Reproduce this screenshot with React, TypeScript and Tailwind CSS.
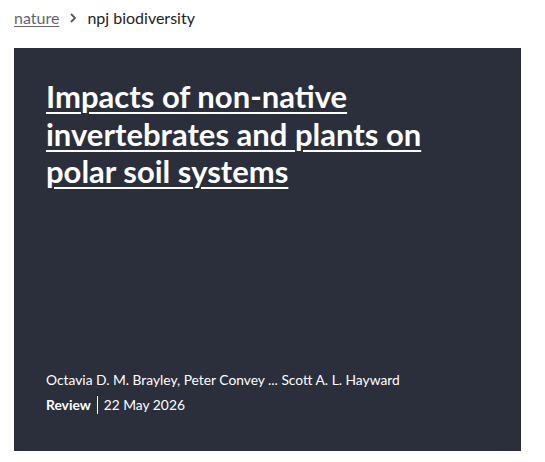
export default function App() {
  return (
    <div className="min-h-screen bg-white px-[14px] pt-[8px] font-['Lato','Liberation_Sans',sans-serif]">
      {/* breadcrumb */}
      <nav className="flex h-[20px] items-center text-[16px] text-[#222]">
        <a href="#" className="text-[#666] underline underline-offset-2">nature</a>
        <svg className="mx-[8px] h-[12px] w-[12px] text-[#555]" viewBox="0 0 12 12" fill="none" stroke="currentColor" strokeWidth="1.8">
          <path d="M4 2l4 4-4 4" />
        </svg>
        <span>npj biodiversity</span>
      </nav>

      {/* hero card */}
      <section className="mt-[20px] flex h-[403px] w-[507px] flex-col justify-between bg-[#2a2f3b] px-[32px] pb-[34px] pt-[30px] text-white">
        <h1 className="max-w-[412px] text-[31px] font-bold leading-[37.5px]">
          <a href="#" className="underline decoration-2 underline-offset-[4px]">
            Impacts of non-native invertebrates and plants on polar soil systems
          </a>
        </h1>
        <div className="text-[13.8px]">
          <p className="leading-[25px]">Octavia D. M. Brayley, Peter Convey ... Scott A. L. Hayward</p>
          <p className="flex items-center leading-[25px]">
            <span className="font-bold">Review</span>
            <span className="mx-[6px] h-[18px] w-px bg-white" />
            <span>22 May 2026</span>
          </p>
        </div>
      </section>
    </div>
  );
}
